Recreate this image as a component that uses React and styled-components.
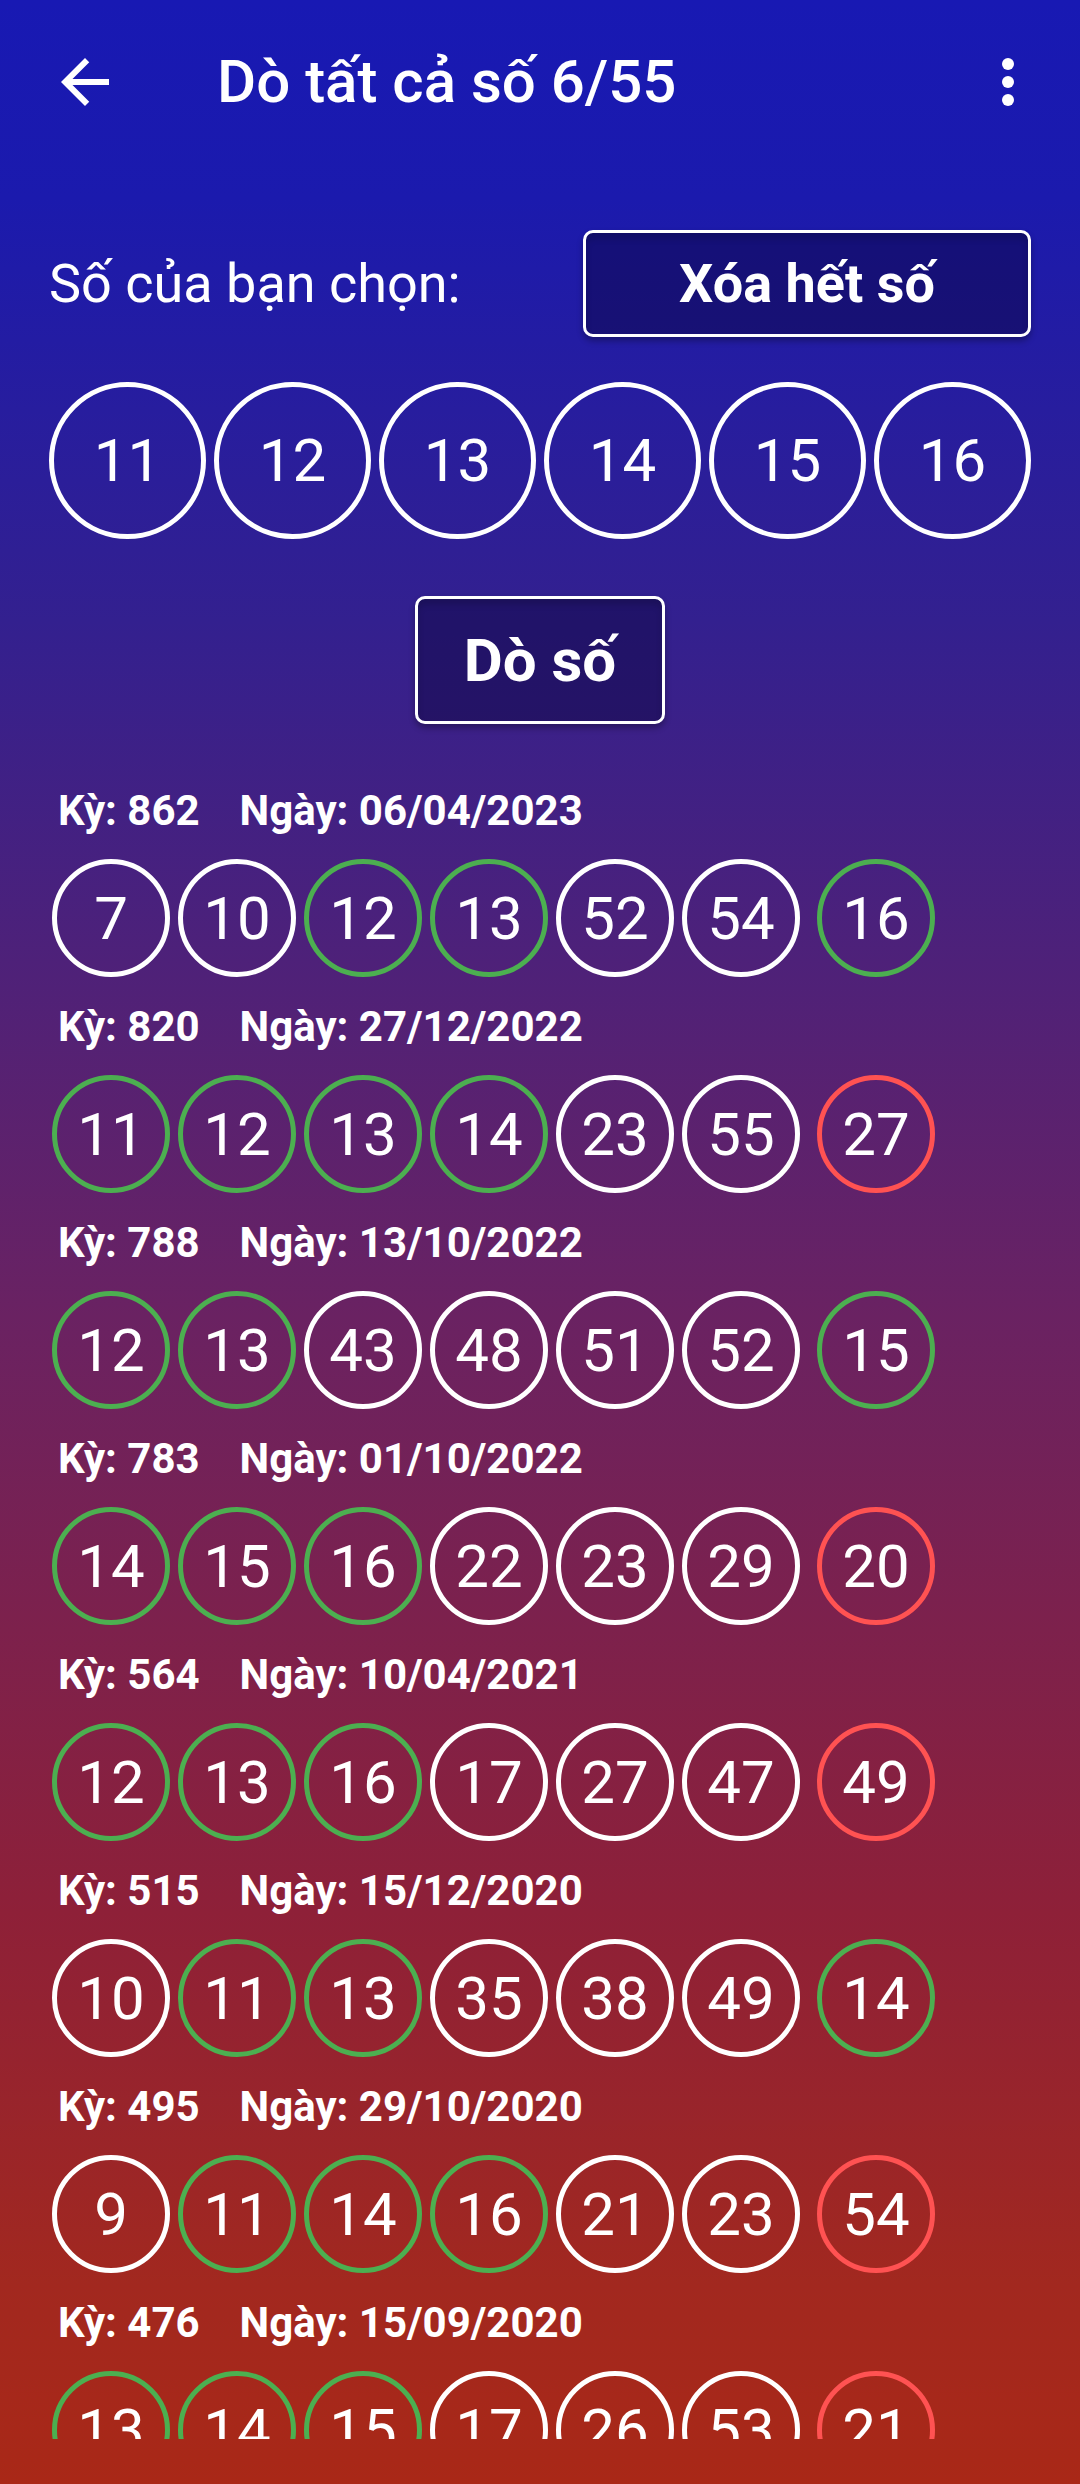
import styled, { createGlobalStyle } from 'styled-components';

const GlobalStyle = createGlobalStyle`
  html, body {
    margin: 0;
    padding: 0;
  }
  body {
    font-family: Roboto, 'Noto Sans', sans-serif;
    color: #fff;
  }
`;

const Page = styled.div`
  width: 1080px;
  height: 2484px;
  box-sizing: border-box;
  display: flex;
  flex-direction: column;
  overflow: hidden;
  background: linear-gradient(
    180deg,
    #1819b3 0%,
    #1b1aad 8%,
    #33208f 25%,
    #6a2262 53%,
    #8e2038 77%,
    #a2281f 92%,
    #a92817 100%
  );
`;

const TopBar = styled.div`
  height: 164px;
  display: flex;
  align-items: center;
  padding: 0 36px 0 49px;
  flex-shrink: 0;
`;

const IconButton = styled.div`
  width: 72px;
  height: 72px;
  display: flex;
  align-items: center;
  justify-content: center;
  svg {
    width: 72px;
    height: 72px;
    fill: #fff;
  }
`;

const Title = styled.h1`
  margin: 0 0 0 96px;
  flex: 1;
  font-size: 60px;
  font-weight: 500;
  line-height: 1.2;
`;

const Content = styled.div`
  padding: 0 49px;
  display: flex;
  flex-direction: column;
  flex-shrink: 0;
`;

const PickRow = styled.div`
  margin-top: 66px;
  display: flex;
  align-items: center;
  justify-content: space-between;
`;

const Label = styled.span`
  font-size: 54px;
  font-weight: 400;
`;

const ActionButton = styled.button`
  box-sizing: border-box;
  width: ${(p) => p.$w}px;
  height: ${(p) => p.$h}px;
  border: 3px solid #fff;
  border-radius: 10px;
  background: rgba(10, 5, 60, 0.45);
  color: #fff;
  font-family: Roboto, sans-serif;
  font-weight: 700;
  font-size: ${(p) => p.$fs}px;
  box-shadow: 0 4px 6px rgba(0, 0, 0, 0.3), inset 0 6px 6px rgba(0, 0, 0, 0.15);
  padding: 0;
`;

const Picked = styled.div`
  margin-top: 45px;
  display: flex;
  gap: 8px;
`;

const Ball = styled.div`
  box-sizing: border-box;
  width: ${(p) => p.$size}px;
  height: ${(p) => p.$size}px;
  border-radius: 50%;
  border: 5px solid
    ${(p) => (p.$tone === 'hit' ? '#4caf50' : p.$tone === 'miss' ? '#ff5252' : '#fff')};
  display: flex;
  align-items: center;
  justify-content: center;
  font-size: 60px;
  font-weight: 400;
  flex-shrink: 0;
  margin-left: ${(p) => (p.$extra ? 9 : 0)}px;
`;

const DoButtonWrap = styled.div`
  margin-top: 57px;
  display: flex;
  justify-content: center;
`;

const List = styled.div`
  margin-top: 61px;
  margin-bottom: 45px;
  flex: 1;
  overflow: hidden;
  padding-left: 52px;
`;

const Draw = styled.div`
  padding-bottom: 24px;
`;

const DrawHead = styled.div`
  line-height: 52px;
  padding-left: 6px;
  display: flex;
  gap: 40px;
  font-size: 42px;
  font-weight: 700;
`;

const BallRow = styled.div`
  margin-top: 22px;
  display: flex;
  gap: 8px;
`;

const ArrowBack = () => (
  <svg viewBox="0 0 24 24">
    <path d="M20 11H7.83l5.59-5.59L12 4l-8 8 8 8 1.41-1.41L7.83 13H20v-2z" />
  </svg>
);

const MoreVert = () => (
  <svg viewBox="0 0 24 24">
    <circle cx="12" cy="6" r="2" />
    <circle cx="12" cy="12" r="2" />
    <circle cx="12" cy="18" r="2" />
  </svg>
);

const picked = [11, 12, 13, 14, 15, 16];

const draws = [
  { ky: 862, date: '06/04/2023', nums: [7, 10, 12, 13, 52, 54, 16] },
  { ky: 820, date: '27/12/2022', nums: [11, 12, 13, 14, 23, 55, 27] },
  { ky: 788, date: '13/10/2022', nums: [12, 13, 43, 48, 51, 52, 15] },
  { ky: 783, date: '01/10/2022', nums: [14, 15, 16, 22, 23, 29, 20] },
  { ky: 564, date: '10/04/2021', nums: [12, 13, 16, 17, 27, 47, 49] },
  { ky: 515, date: '15/12/2020', nums: [10, 11, 13, 35, 38, 49, 14] },
  { ky: 495, date: '29/10/2020', nums: [9, 11, 14, 16, 21, 23, 54] },
  { ky: 476, date: '15/09/2020', nums: [13, 14, 15, 17, 26, 53, 21] },
];

// green when matched, the bonus (last) ball goes red when it misses
const toneOf = (n, i) => (picked.includes(n) ? 'hit' : i === 6 ? 'miss' : 'plain');

export default function App() {
  return (
    <Page>
      <GlobalStyle />
      <TopBar>
        <IconButton>
          <ArrowBack />
        </IconButton>
        <Title>Dò tất cả số 6/55</Title>
        <IconButton>
          <MoreVert />
        </IconButton>
      </TopBar>

      <Content>
        <PickRow>
          <Label>Số của bạn chọn:</Label>
          <ActionButton $w={448} $h={107} $fs={54}>
            Xóa hết số
          </ActionButton>
        </PickRow>
        <Picked>
          {picked.map((n) => (
            <Ball key={n} $size={157} $tone="plain">
              {n}
            </Ball>
          ))}
        </Picked>
        <DoButtonWrap>
          <ActionButton $w={250} $h={128} $fs={60}>
            Dò số
          </ActionButton>
        </DoButtonWrap>
      </Content>

      <List>
        {draws.map((d) => (
          <Draw key={d.ky}>
            <DrawHead>
              <span>Kỳ: {d.ky}</span>
              <span>Ngày: {d.date}</span>
            </DrawHead>
            <BallRow>
              {d.nums.map((n, i) => (
                <Ball key={i} $size={118} $tone={toneOf(n, i)} $extra={i === 6}>
                  {n}
                </Ball>
              ))}
            </BallRow>
          </Draw>
        ))}
      </List>
    </Page>
  );
}
